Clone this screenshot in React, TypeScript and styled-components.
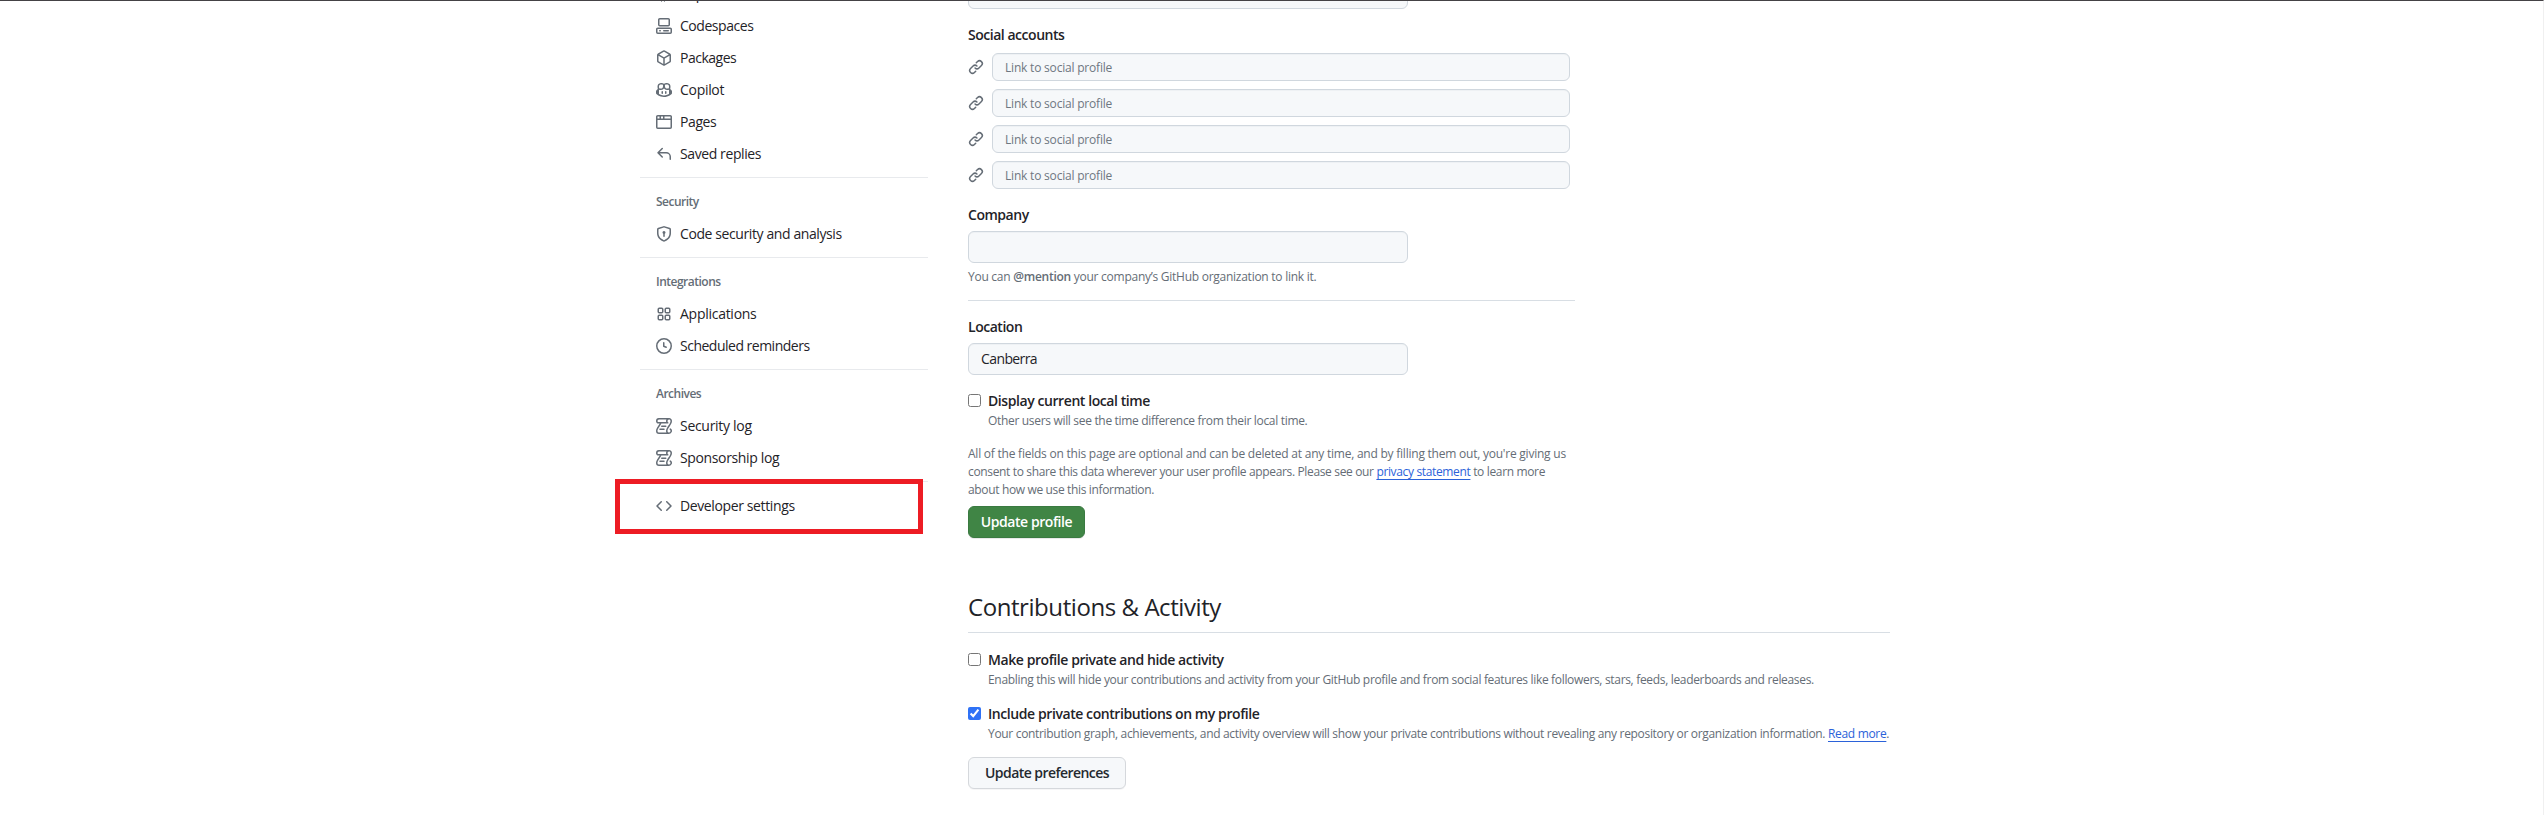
import React from 'react';
import styled, { createGlobalStyle } from 'styled-components';

const GlobalStyle = createGlobalStyle`
  *, *::before, *::after { box-sizing: border-box; }
  html, body { margin: 0; padding: 0; background: #fff; overflow: hidden; }
  body {
    font-family: 'Open Sans', 'Noto Sans', sans-serif;
    font-size: 14px;
    line-height: 21px;
    color: #1f2328;
  }
`;

const Page = styled.div`
  height: 815px;
  overflow: hidden;
  display: flex;
  background: #fff;
  border-top: 1px solid #444245;
  border-right: 1px solid #f0f0f0;
`;

const Sidebar = styled.nav`
  width: 288px;
  margin: -23px 40px 0 640px;
  flex: none;
`;

const NavDivider = styled.div`
  height: 1px;
  margin: 7px 0 0;
  background: #e8eaed;
`;

const NavTitle = styled.h3`
  margin: 0;
  height: 40px;
  padding: 15px 16px 0;
  font-size: 12px;
  line-height: 18px;
  font-weight: 600;
  color: #656d76;
  letter-spacing: -0.5px;
`;

const NavLink = styled.a`
  display: flex;
  align-items: center;
  gap: 8px;
  height: 32px;
  padding: 0 16px;
  color: #1f2328;
  white-space: nowrap;
`;

const NavText = styled.span<{ $tracking: number }>`
  padding-bottom: 1px;
  letter-spacing: ${(p) => p.$tracking}px;
`;

const Highlighted = styled.div`
  position: relative;
  padding-top: 8px;

  &::after {
    content: '';
    position: absolute;
    left: -25px;
    top: -3px;
    width: 308px;
    height: 55px;
    border: 5px solid #ed1c24;
  }
`;

const IconSvg = styled.svg`
  flex: none;
  width: 16px;
  height: 16px;
  fill: #656d76;
`;

const Main = styled.main`
  width: 922px;
  flex: none;
  margin-top: -24px;
`;

const ProfileForm = styled.form`
  width: 607px;
`;

const Label = styled.label<{ $gap?: number }>`
  display: block;
  padding-bottom: ${(p) => p.$gap ?? 6}px;
  font-weight: 600;
  letter-spacing: -0.47px;
`;

const Field = styled.input<{ $small?: boolean }>`
  display: block;
  width: ${(p) => (p.$small ? '578px' : '440px')};
  height: ${(p) => (p.$small ? '28px' : '32px')};
  padding: 0 12px ${(p) => (p.$small ? 0 : 1)}px;
  border: 1px solid #d0d7de;
  border-radius: 6px;
  background: #f6f8fa;
  box-shadow: inset 0 1px 0 rgba(208, 215, 222, 0.2);
  font-family: inherit;
  font-size: ${(p) => (p.$small ? '12px' : '14px')};
  letter-spacing: ${(p) => (p.$small ? '-0.2px' : '-0.6px')};
  color: #1f2328;
  outline: none;

  &::placeholder {
    color: #6e7781;
    opacity: 1;
  }
`;

const FieldGroup = styled.div<{ $top: number }>`
  padding-top: ${(p) => p.$top}px;
`;

const SocialList = styled.div`
  display: flex;
  flex-direction: column;
  gap: 8px;
`;

const SocialRow = styled.div`
  display: flex;
  align-items: center;
  gap: 8px;
`;

const Note = styled.p<{ $top?: number; $indent?: boolean; $tracking?: number }>`
  margin: ${(p) => p.$top ?? 0}px 0 0 ${(p) => (p.$indent ? 20 : 0)}px;
  font-size: 12px;
  line-height: 18px;
  letter-spacing: ${(p) => p.$tracking ?? -0.32}px;
  color: #656d76;
  white-space: nowrap;
`;

const NoteLine = styled.span<{ $tracking: number }>`
  display: block;
  letter-spacing: ${(p) => p.$tracking}px;
`;

const Mention = styled.strong`
  font-weight: 600;
`;

const InlineLink = styled.a`
  color: #2b62d9;
  text-decoration: underline;
  text-underline-offset: 3px;
`;

const Rule = styled.hr<{ $top: number }>`
  height: 1px;
  margin: ${(p) => p.$top}px 0 0;
  border: 0;
  background: #d8dee4;
`;

const CheckLine = styled.label<{ $top: number }>`
  display: flex;
  align-items: flex-start;
  gap: 7px;
  height: 21px;
  margin-top: ${(p) => p.$top}px;
`;

const CheckText = styled.span`
  line-height: 19px;
  font-weight: 600;
  letter-spacing: -0.42px;
  white-space: nowrap;
`;

const Checkbox = styled.input`
  width: 13px;
  height: 13px;
  margin: 3px 0 0;
  flex: none;
  accent-color: #2f72f6;
`;

const Button = styled.button<{ $primary?: boolean; $top: number }>`
  display: block;
  height: 32px;
  width: ${(p) => (p.$primary ? '117px' : '158px')};
  margin-top: ${(p) => p.$top}px;
  padding: 0 0 1px;
  border: 1px solid ${(p) => (p.$primary ? '#3a7a41' : '#d5d8dc')};
  border-radius: 6px;
  background: ${(p) => (p.$primary ? '#408545' : '#f6f8fa')};
  box-shadow: 0 1px 0 rgba(31, 35, 40, ${(p) => (p.$primary ? 0.1 : 0.04)});
  font-family: inherit;
  font-size: 14px;
  font-weight: 600;
  line-height: 19px;
  letter-spacing: ${(p) => (p.$primary ? '-0.43px' : '-0.55px')};
  color: ${(p) => (p.$primary ? '#fff' : '#24292f')};
  white-space: nowrap;
`;

const SectionTitle = styled.h2`
  margin: 51px 0 0;
  height: 36px;
  font-size: 24px;
  line-height: 35px;
  font-weight: 400;
  letter-spacing: -0.43px;
`;

const iconPaths = {
  repo: 'M2 2.5A2.5 2.5 0 0 1 4.5 0h8.75a.75.75 0 0 1 .75.75v12.5a.75.75 0 0 1-.75.75h-2.5a.75.75 0 0 1 0-1.5h1.75v-2h-8a1 1 0 0 0-.714 1.7.75.75 0 1 1-1.072 1.05A2.495 2.495 0 0 1 2 11.5Zm10.5-1h-8a1 1 0 0 0-1 1v6.708A2.486 2.486 0 0 1 4.5 9h8ZM5 12.25a.25.25 0 0 1 .25-.25h3.5a.25.25 0 0 1 .25.25v3.25a.25.25 0 0 1-.4.2l-1.45-1.087a.249.249 0 0 0-.3 0L5.4 15.7a.25.25 0 0 1-.4-.2Z',
  codespaces: 'M0 11.25c0-.966.784-1.75 1.75-1.75h12.5c.966 0 1.75.784 1.75 1.75v3A1.75 1.75 0 0 1 14.25 16H1.75A1.75 1.75 0 0 1 0 14.25Zm2-9.5C2 .784 2.784 0 3.75 0h8.5C13.216 0 14 .784 14 1.75v5a1.75 1.75 0 0 1-1.75 1.75h-8.5A1.75 1.75 0 0 1 2 6.75Zm1.75-.25a.25.25 0 0 0-.25.25v5c0 .138.112.25.25.25h8.5a.25.25 0 0 0 .25-.25v-5a.25.25 0 0 0-.25-.25Zm-2 9.5a.25.25 0 0 0-.25.25v3c0 .138.112.25.25.25h12.5a.25.25 0 0 0 .25-.25v-3a.25.25 0 0 0-.25-.25ZM7 12.75a.75.75 0 0 1 .75-.75h4.5a.75.75 0 0 1 0 1.5h-4.5a.75.75 0 0 1-.75-.75Zm-4 0a.75.75 0 0 1 .75-.75h.5a.75.75 0 0 1 0 1.5h-.5a.75.75 0 0 1-.75-.75Z',
  package: 'm8.878.392 5.25 3.045c.54.314.872.89.872 1.514v6.098a1.75 1.75 0 0 1-.872 1.514l-5.25 3.045a1.75 1.75 0 0 1-1.756 0l-5.25-3.045A1.75 1.75 0 0 1 1 11.049V4.951c0-.624.332-1.201.872-1.514L7.122.392a1.75 1.75 0 0 1 1.756 0ZM7.875 1.69l-4.63 2.685L8 7.133l4.755-2.758-4.63-2.685a.248.248 0 0 0-.25 0ZM2.5 5.677v5.372c0 .09.047.171.125.216l4.625 2.683V8.432Zm6.25 8.271 4.625-2.683a.25.25 0 0 0 .125-.216V5.677L8.75 8.432Z',
  copilot: 'M7.998 15.035c-4.562 0-7.873-2.914-7.998-3.749V9.338c.085-.628.677-1.686 1.588-2.065.013-.07.024-.143.036-.218.029-.183.06-.384.126-.612-.201-.508-.254-1.084-.254-1.656 0-.87.128-1.769.693-2.484.579-.733 1.494-1.124 2.724-1.261 1.206-.134 2.262.034 2.944.765.05.053.096.108.139.165.044-.057.094-.112.143-.165.682-.731 1.738-.899 2.944-.765 1.23.137 2.145.528 2.724 1.261.566.715.693 1.614.693 2.484 0 .572-.053 1.148-.254 1.656.066.228.098.429.126.612.012.076.024.148.037.218.924.385 1.522 1.471 1.591 2.095v1.872c0 .766-3.351 3.795-8.002 3.795Zm0-1.485c2.28 0 4.584-1.11 5.002-1.433V7.862l-.023-.116c-.49.21-1.075.291-1.727.291-1.146 0-2.059-.327-2.71-.991A3.222 3.222 0 0 1 8 6.303a3.24 3.24 0 0 1-.544.743c-.65.664-1.563.991-2.71.991-.652 0-1.236-.081-1.727-.291l-.023.116v4.255c.419.323 2.722 1.433 5.002 1.433ZM6.762 2.83c-.193-.206-.637-.413-1.682-.297-1.019.113-1.479.404-1.713.7-.247.312-.369.789-.369 1.554 0 .793.129 1.171.308 1.371.162.181.519.379 1.442.379.853 0 1.339-.235 1.638-.54.315-.322.527-.827.617-1.553.117-.935-.037-1.395-.241-1.614Zm4.155-.297c-1.044-.116-1.488.091-1.681.297-.204.219-.359.679-.242 1.614.091.726.303 1.231.618 1.553.299.305.784.54 1.638.54.922 0 1.28-.198 1.442-.379.179-.2.308-.578.308-1.371 0-.765-.123-1.242-.37-1.554-.233-.296-.693-.587-1.713-.7ZM6.25 9.037a.75.75 0 0 1 .75.75v1.501a.75.75 0 0 1-1.5 0V9.787a.75.75 0 0 1 .75-.75Zm4.25.75v1.501a.75.75 0 0 1-1.5 0V9.787a.75.75 0 0 1 1.5 0Z',
  browser: 'M0 2.75C0 1.784.784 1 1.75 1h12.5c.966 0 1.75.784 1.75 1.75v10.5A1.75 1.75 0 0 1 14.25 15H1.75A1.75 1.75 0 0 1 0 13.25ZM14.5 6h-13v7.25c0 .138.112.25.25.25h12.5a.25.25 0 0 0 .25-.25Zm-6-3.5v2h6V2.75a.25.25 0 0 0-.25-.25ZM5 2.5v2h2v-2Zm-3.25 0a.25.25 0 0 0-.25.25V4.5h2v-2Z',
  reply: 'M6.78 1.97a.75.75 0 0 1 0 1.06L3.81 6h6.44A4.75 4.75 0 0 1 15 10.75v2.5a.75.75 0 0 1-1.5 0v-2.5a3.25 3.25 0 0 0-3.25-3.25H3.81l2.97 2.97a.749.749 0 0 1-.326 1.275.749.749 0 0 1-.734-.215L1.47 7.28a.75.75 0 0 1 0-1.06l4.25-4.25a.75.75 0 0 1 1.06 0Z',
  shieldLock: 'm8.533.133 5.25 1.68A1.75 1.75 0 0 1 15 3.48V7c0 1.566-.32 3.182-1.303 4.682-.983 1.498-2.585 2.813-5.032 3.855a1.697 1.697 0 0 1-1.33 0c-2.447-1.042-4.049-2.357-5.032-3.855C1.32 10.182 1 8.566 1 7V3.48a1.75 1.75 0 0 1 1.217-1.667l5.25-1.68a1.748 1.748 0 0 1 1.066 0Zm-.61 1.429.001.001-5.25 1.68a.251.251 0 0 0-.174.237V7c0 1.36.275 2.666 1.057 3.859.784 1.194 2.121 2.342 4.366 3.298a.196.196 0 0 0 .154 0c2.245-.957 3.582-2.103 4.366-3.297C13.225 9.666 13.5 8.358 13.5 7V3.48a.25.25 0 0 0-.174-.238l-5.25-1.68a.25.25 0 0 0-.153 0ZM9.5 6.5c0 .536-.286 1.032-.75 1.3v2.45a.75.75 0 0 1-1.5 0V7.8A1.5 1.5 0 1 1 9.5 6.5Z',
  apps: 'M3.25 1.5h2.5A1.75 1.75 0 0 1 7.5 3.25v2.5A1.75 1.75 0 0 1 5.75 7.5h-2.5A1.75 1.75 0 0 1 1.5 5.75v-2.5A1.75 1.75 0 0 1 3.25 1.5ZM3.25 3a.25.25 0 0 0-.25.25v2.5c0 .138.112.25.25.25h2.5A.25.25 0 0 0 6 5.75v-2.5A.25.25 0 0 0 5.75 3ZM10.25 1.5h2.5a1.75 1.75 0 0 1 1.75 1.75v2.5a1.75 1.75 0 0 1-1.75 1.75h-2.5A1.75 1.75 0 0 1 8.5 5.75v-2.5a1.75 1.75 0 0 1 1.75-1.75Zm0 1.5a.25.25 0 0 0-.25.25v2.5c0 .138.112.25.25.25h2.5a.25.25 0 0 0 .25-.25v-2.5a.25.25 0 0 0-.25-.25ZM3.25 8.5h2.5a1.75 1.75 0 0 1 1.75 1.75v2.5a1.75 1.75 0 0 1-1.75 1.75h-2.5a1.75 1.75 0 0 1-1.75-1.75v-2.5A1.75 1.75 0 0 1 3.25 8.5Zm0 1.5a.25.25 0 0 0-.25.25v2.5c0 .138.112.25.25.25h2.5a.25.25 0 0 0 .25-.25v-2.5a.25.25 0 0 0-.25-.25ZM10.25 8.5h2.5a1.75 1.75 0 0 1 1.75 1.75v2.5a1.75 1.75 0 0 1-1.75 1.75h-2.5a1.75 1.75 0 0 1-1.75-1.75v-2.5a1.75 1.75 0 0 1 1.75-1.75Zm0 1.5a.25.25 0 0 0-.25.25v2.5c0 .138.112.25.25.25h2.5a.25.25 0 0 0 .25-.25v-2.5a.25.25 0 0 0-.25-.25Z',
  clock: 'M8 0a8 8 0 1 1 0 16A8 8 0 0 1 8 0ZM1.5 8a6.5 6.5 0 1 0 13 0 6.5 6.5 0 0 0-13 0Zm7-3.25v2.992l2.028.812a.75.75 0 0 1-.557 1.392l-2.5-1A.751.751 0 0 1 7 8.25v-3.5a.75.75 0 0 1 1.5 0Z',
  log: 'M5 8.25a.75.75 0 0 1 .75-.75h4a.75.75 0 0 1 0 1.5h-4A.75.75 0 0 1 5 8.25ZM4 10.5A.75.75 0 0 0 4 12h4a.75.75 0 0 0 0-1.5H4ZM13-.005c1.654 0 3 1.328 3 3 0 .982-.338 1.933-.783 2.818-.443.879-1.028 1.758-1.582 2.588l-.011.017c-.568.853-1.104 1.659-1.501 2.446-.398.789-.623 1.494-.623 2.136a1.5 1.5 0 1 0 2.333-1.248.75.75 0 0 1 .834-1.246A3 3 0 0 1 13 16H3a3 3 0 0 1-3-3c0-1.582.891-3.135 1.777-4.506.209-.322.418-.637.623-.946.473-.709.923-1.386 1.287-2.048H2.51c-.576 0-1.381-.133-1.907-.783A2.68 2.68 0 0 1 0 2.995a3 3 0 0 1 3-3Zm0 1.5a1.5 1.5 0 0 0-1.5 1.5c0 .476.223.834.667 1.132A.75.75 0 0 1 11.75 5.5H5.368c-.467 1.003-1.141 2.015-1.773 2.963-.192.289-.381.571-.558.845C2.13 10.711 1.5 11.916 1.5 13A1.5 1.5 0 0 0 3 14.5h7.401A2.989 2.989 0 0 1 10 13c0-.979.338-1.928.784-2.812.441-.874 1.023-1.748 1.575-2.576l.017-.026c.568-.853 1.103-1.658 1.501-2.448.398-.79.623-1.497.623-2.143 0-.838-.669-1.5-1.5-1.5Zm-10 0a1.5 1.5 0 0 0-1.5 1.5c0 .321.1.569.27.778.097.12.325.227.74.227h7.674A2.737 2.737 0 0 1 10 2.995c0-.546.146-1.059.401-1.5Z',
  code: 'm11.28 3.22 4.25 4.25a.75.75 0 0 1 0 1.06l-4.25 4.25a.749.749 0 0 1-1.275-.326.749.749 0 0 1 .215-.734L13.94 8l-3.72-3.72a.749.749 0 0 1 .326-1.275.749.749 0 0 1 .734.215Zm-6.56 0a.751.751 0 0 1 1.042.018.751.751 0 0 1 .018 1.042L2.06 8l3.72 3.72a.749.749 0 0 1-.326 1.275.749.749 0 0 1-.734-.215L.47 8.53a.75.75 0 0 1 0-1.06Z',
  link: 'm7.775 3.275 1.25-1.25a3.5 3.5 0 1 1 4.95 4.95l-2.5 2.5a3.5 3.5 0 0 1-4.95 0 .751.751 0 0 1 .018-1.042.751.751 0 0 1 1.042-.018 1.998 1.998 0 0 0 2.83 0l2.5-2.5a2.002 2.002 0 0 0-2.83-2.83l-1.25 1.25a.751.751 0 0 1-1.042-.018.751.751 0 0 1-.018-1.042Zm-4.69 9.64a1.998 1.998 0 0 0 2.83 0l1.25-1.25a.751.751 0 0 1 1.042.018.751.751 0 0 1 .018 1.042l-1.25 1.25a3.5 3.5 0 1 1-4.95-4.95l2.5-2.5a3.5 3.5 0 0 1 4.95 0 .751.751 0 0 1-.018 1.042.751.751 0 0 1-1.042.018 1.998 1.998 0 0 0-2.83 0l-2.5 2.5a1.998 1.998 0 0 0 0 2.83Z',
};

type IconName = keyof typeof iconPaths;

function Icon({ name }: { name: IconName }) {
  return (
    <IconSvg viewBox="0 0 16 16" aria-hidden="true">
      <path d={iconPaths[name]} />
    </IconSvg>
  );
}

function NavItem({ icon, text, tracking = -0.4 }: { icon: IconName; text: string; tracking?: number }) {
  return (
    <NavLink>
      <Icon name={icon} />
      <NavText $tracking={tracking}>{text}</NavText>
    </NavLink>
  );
}

const socialSlots = [1, 2, 3, 4];

export default function App() {
  return (
    <>
      <GlobalStyle />
      <Page>
        <Sidebar>
          <NavItem icon="repo" text="Repositories" />
          <NavItem icon="codespaces" text="Codespaces" tracking={-0.45} />
          <NavItem icon="package" text="Packages" tracking={-0.5} />
          <NavItem icon="copilot" text="Copilot" tracking={-0.3} />
          <NavItem icon="browser" text="Pages" />
          <NavItem icon="reply" text="Saved replies" />
          <NavDivider />
          <NavTitle>Security</NavTitle>
          <NavItem icon="shieldLock" text="Code security and analysis" />
          <NavDivider />
          <NavTitle>Integrations</NavTitle>
          <NavItem icon="apps" text="Applications" tracking={-0.27} />
          <NavItem icon="clock" text="Scheduled reminders" tracking={-0.5} />
          <NavDivider />
          <NavTitle>Archives</NavTitle>
          <NavItem icon="log" text="Security log" tracking={-0.3} />
          <NavItem icon="log" text="Sponsorship log" tracking={-0.36} />
          <NavDivider />
          <Highlighted>
            <NavItem icon="code" text="Developer settings" tracking={-0.38} />
          </Highlighted>
        </Sidebar>
        <Main>
          <ProfileForm>
            <Field readOnly />
            <FieldGroup $top={15}>
              <Label $gap={8}>Social accounts</Label>
              <SocialList>
                {socialSlots.map((slot) => (
                  <SocialRow key={slot}>
                    <Icon name="link" />
                    <Field $small readOnly placeholder="Link to social profile" />
                  </SocialRow>
                ))}
              </SocialList>
            </FieldGroup>
            <FieldGroup $top={15}>
              <Label>Company</Label>
              <Field readOnly />
              <Note $top={5} $tracking={-0.26}>
                You can <Mention>@mention</Mention> your company’s GitHub organization to link it.
              </Note>
            </FieldGroup>
            <Rule $top={14} />
            <FieldGroup $top={15}>
              <Label>Location</Label>
              <Field readOnly value="Canberra" />
            </FieldGroup>
            <CheckLine $top={16}>
              <Checkbox type="checkbox" readOnly checked={false} />
              <CheckText>Display current local time</CheckText>
            </CheckLine>
            <Note $indent>Other users will see the time difference from their local time.</Note>
            <Note $top={15}>
              <NoteLine $tracking={-0.23}>
                All of the fields on this page are optional and can be deleted at any time, and by filling them out, you're giving us
              </NoteLine>
              <NoteLine $tracking={-0.35}>
                consent to share this data wherever your user profile appears. Please see our <InlineLink>privacy statement</InlineLink> to learn more
              </NoteLine>
              <NoteLine $tracking={-0.35}>about how we use this information.</NoteLine>
            </Note>
            <Button $primary $top={7} type="button">Update profile</Button>
          </ProfileForm>
          <SectionTitle>Contributions &amp; Activity</SectionTitle>
          <Rule $top={7} />
          <CheckLine $top={17}>
            <Checkbox type="checkbox" readOnly checked={false} />
            <CheckText>Make profile private and hide activity</CheckText>
          </CheckLine>
          <Note $indent $tracking={-0.325}>
            Enabling this will hide your contributions and activity from your GitHub profile and from social features like followers, stars, feeds, leaderboards and releases.
          </Note>
          <CheckLine $top={15}>
            <Checkbox type="checkbox" readOnly checked />
            <CheckText>Include private contributions on my profile</CheckText>
          </CheckLine>
          <Note $indent>
            Your contribution graph, achievements, and activity overview will show your private contributions without revealing any repository or organization information. <InlineLink>Read more</InlineLink>.
          </Note>
          <Button $top={14} type="button">Update preferences</Button>
        </Main>
      </Page>
    </>
  );
}
